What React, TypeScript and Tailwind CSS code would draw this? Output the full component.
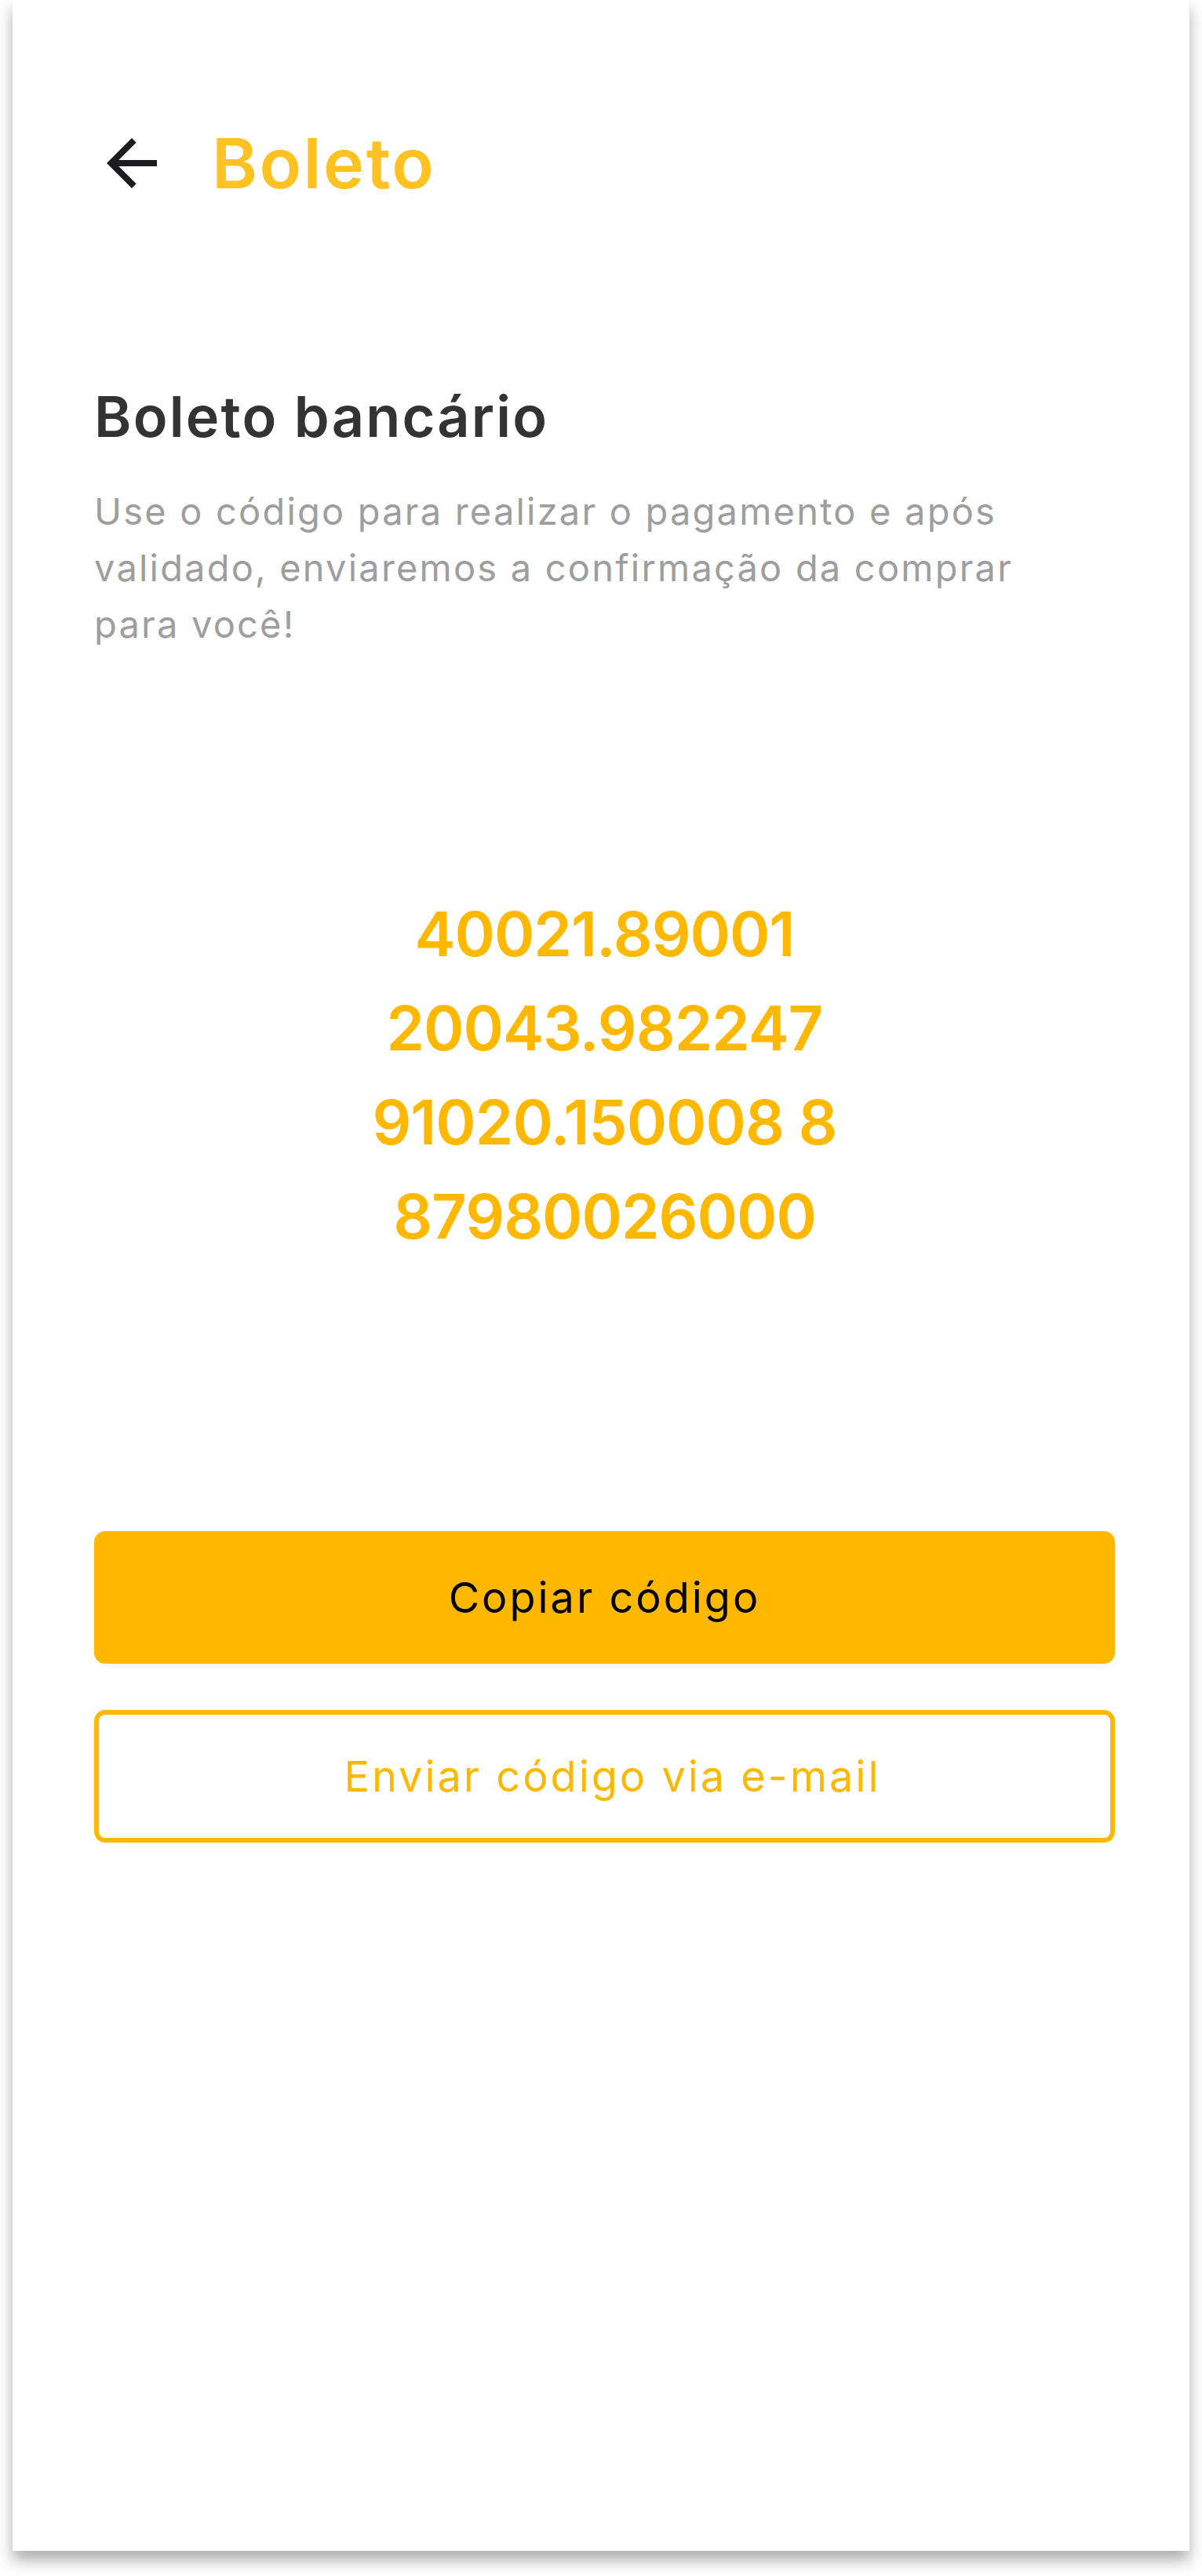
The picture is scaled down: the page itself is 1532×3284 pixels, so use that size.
import React from "react"

const codeLines = [
  "40021.89001",
  "20043.982247",
  "91020.150008 8",
  "87980026000",
]

const ArrowBack = () => (
  <svg viewBox="0 0 24 24" className="w-[96px] h-[96px] shrink-0" fill="#1c1b1f">
    <path d="M20 11H7.83l5.59-5.59L12 4l-8 8 8 8 1.41-1.41L7.83 13H20v-2z" />
  </svg>
)

export default function App() {
  return (
    <div className="w-full min-h-[3284px] bg-white font-['Inter',sans-serif]">
      <div className="mx-auto w-[1500px] h-[3252px] bg-white shadow-[0_12px_18px_rgba(0,0,0,0.32)] pl-[104px] pr-[95px] pt-[160px] flex flex-col">
        {/* Header */}
        <div className="flex items-center h-[96px]">
          <ArrowBack />
          <h1 className="ml-[54px] text-[88px] leading-none font-semibold text-[#ffc222] tracking-[2.5px]">
            Boleto
          </h1>
        </div>

        {/* Intro */}
        <h2 className="mt-[239px] text-[72px] leading-none font-semibold text-[#333333] tracking-[2.2px]">
          Boleto bancário
        </h2>
        <p className="mt-[49px] text-[47px] leading-[72px] text-[#9e9e9e] tracking-[2.2px] pr-[70px]">
          Use o código para realizar o pagamento e após validado, enviaremos a confirmação da comprar para você!
        </p>

        {/* Barcode number */}
        <div className="mt-[299px] flex flex-col items-center text-[78px] leading-[120px] font-semibold text-[#ffb800] tracking-[-1px]">
          {codeLines.map((line) => (
            <span key={line}>{line}</span>
          ))}
        </div>

        {/* Actions */}
        <div className="mt-[341px] flex flex-col gap-[59px]">
          <button className="h-[169px] w-full rounded-[14px] bg-[#ffb800] text-[54px] text-black tracking-[3px]">
            Copiar código
          </button>
          <button className="h-[169px] w-full rounded-[14px] border-[6px] border-[#ffb800] bg-white pl-[20px] text-[54px] text-[#ffb800] tracking-[3px]">
            Enviar código via e-mail
          </button>
        </div>
      </div>
    </div>
  )
}
